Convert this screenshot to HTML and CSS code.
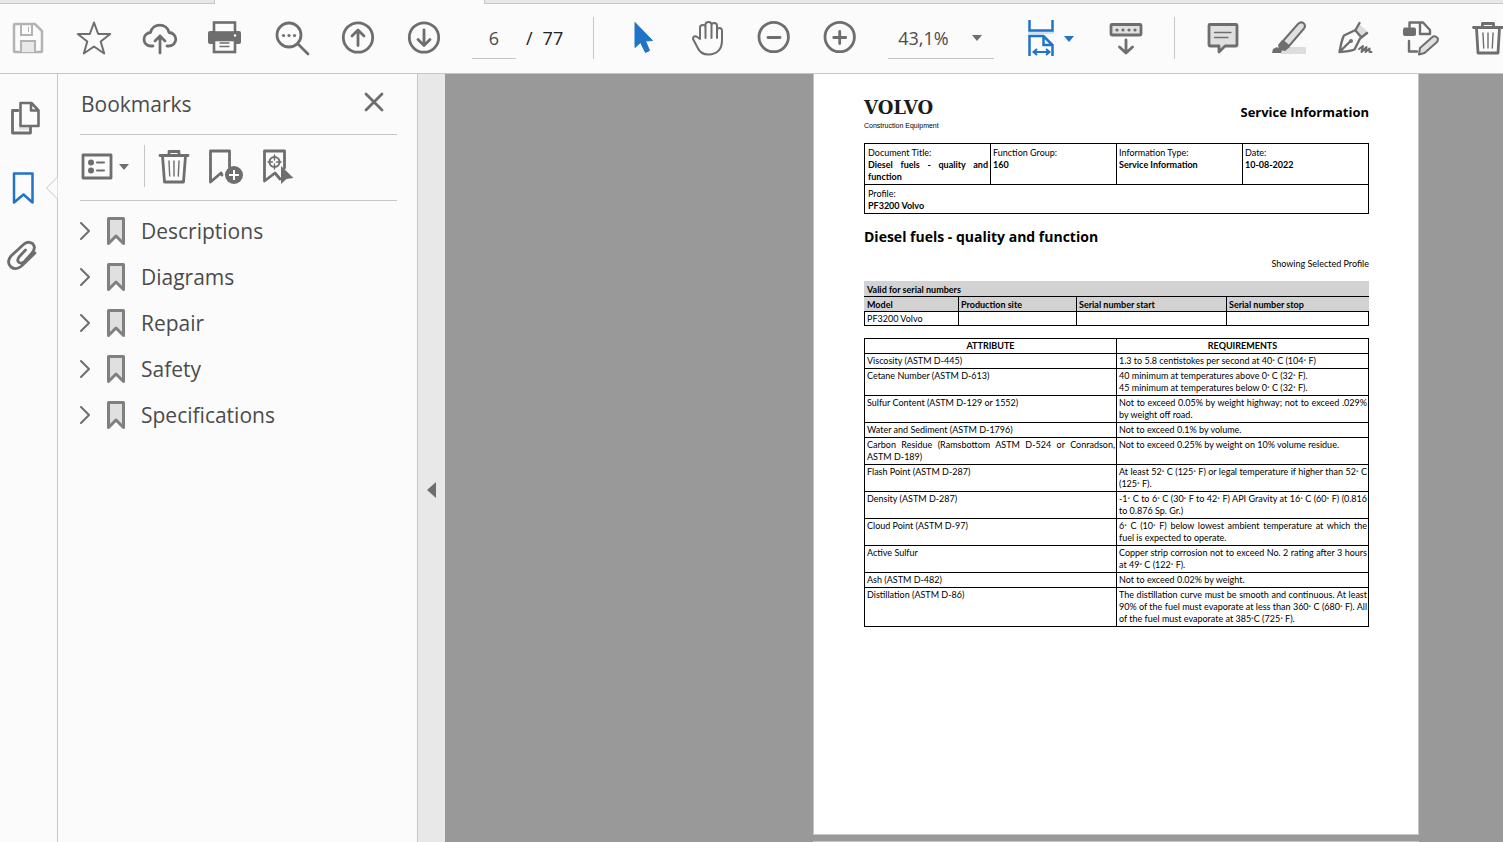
FILE: index.html
```html
<!DOCTYPE html>
<html lang="en">
<head>
<meta charset="utf-8">
<title>Service manual</title>
<link rel="stylesheet" href="styles.css">
</head>
<body>
<div class="app">
  <div class="tabs"><span class="tab-inactive tab-left"></span><span class="tab-active"></span><span class="tab-inactive tab-rest"></span></div>
  <header class="toolbar">
    <div class="group file-group">
      <button class="tool" aria-label="Save" disabled><svg viewBox="0 0 46 46"><g fill="none" stroke="#b3b3b3" stroke-width="2.500"><path d="M10 9h20l7 7v20q0 1-1 1H10q-1 0-1-1V10q0-1 1-1z"/><path stroke-width="2" d="M16 9v11h11V9"/><path stroke-width="2" fill="#e8e8e8" d="M16 37V26h14v11"/><path stroke-width="1" d="M23.500 12v5"/></g></svg></button>
      <button class="tool" aria-label="Star"><svg viewBox="0 0 46 46"><path class="line" d="M23 7.500l4.200 11.500h12l-9.500 7.500 3.500 12-10.200-7-10.200 7 3.500-12L6.800 19h12z"/></svg></button>
      <button class="tool" aria-label="Upload"><svg viewBox="0 0 46 46"><path class="line thick" d="M16 31h-2a6.500 6.500 0 0 1-.5-13.500 9.500 9.500 0 0 1 18.500 0 6.700 6.700 0 0 1 0 13.500h-2M23 38V21M18 26l5-5 5 5"/></svg></button>
      <button class="tool" aria-label="Print"><svg viewBox="0 0 46 46"><rect x="5" y="16" width="33" height="13" rx="2" class="solid"/><rect x="11" y="7.500" width="21" height="10" class="paper"/><rect x="11" y="25" width="21" height="12" class="paper"/><path class="solid" d="M10 17h23v8H10z"/><path class="line thin" d="M17 28h9M17 31.500h9"/><circle cx="32" cy="20.500" r="1.200" fill="#fff"/></svg></button>
      <button class="tool" aria-label="Find"><svg viewBox="0 0 46 46"><circle cx="20" cy="20" r="12" class="line thick"/><path class="line thick" d="M29 29l10 10"/><g class="solid"><circle cx="14.500" cy="20.500" r="1.600"/><circle cx="20" cy="20.500" r="1.600"/><circle cx="25.500" cy="20.500" r="1.600"/></g></svg></button>
      <button class="tool" aria-label="Previous page"><svg viewBox="0 0 46 46"><circle cx="23" cy="22.500" r="14.700" class="line thick"/><path class="line thick" d="M23 30.500V15.500M17 21l6-6 6 6"/></svg></button>
      <button class="tool" aria-label="Next page"><svg viewBox="0 0 46 46"><circle cx="23" cy="22.500" r="14.700" class="line thick"/><path class="line thick" d="M23 15v15M17 24.500l6 6 6-6"/></svg></button>
    </div>
    <div class="pager"><input class="page-input" aria-label="Page number" value="6"><span class="slash">/</span><span>77</span></div>
    <span class="separator"></span>
    <div class="group view-group">
      <button class="tool" aria-label="Select"><svg viewBox="0 0 46 46"><path fill="#2173c7" stroke="#2173c7" stroke-linejoin="round" d="M15 7.500v25l5.500-5 5 10 4-2-4-9.500 7-.5z"/></svg></button>
      <button class="tool" aria-label="Hand"><svg viewBox="0 0 46 46"><path class="line" d="M14 24V12.500q0-2.500 2.800-2.500t2.700 2.500V23V9.500Q19.500 7 22.500 7t3 2.500V23V10q.3-2 2.700-2 2.800 0 2.800 2.500V23v-8q.3-2 2.500-2t2.500 2.500V25q0 14-13.500 14.500-8 0-11-7L7 24q0-3.500 3.500-2.500z"/></svg></button>
      <button class="tool" aria-label="Zoom out"><svg viewBox="0 0 46 46"><circle cx="21.700" cy="22" r="14.700" class="line thick"/><path class="line thick" d="M16 22.500h12"/></svg></button>
      <button class="tool" aria-label="Zoom in"><svg viewBox="0 0 46 46"><circle cx="21.700" cy="22" r="14.700" class="line thick"/><path class="line thick" d="M15.700 22.500h12M21.700 16.500v12"/></svg></button>
    </div>
    <div class="zoom"><select class="zoom-select" aria-label="Zoom level"><option>43,1%</option></select><svg class="caret" viewBox="0 0 10 6"><path d="M0 0h10L5 6z"/></svg></div>
    <button class="tool fit" aria-label="Fit width"><svg viewBox="0 0 54 46"><path fill="#cfe0f2" d="M4 16h26v3H4z"/><g fill="none" stroke="#2173c7" stroke-width="2.500"><path d="M5.500 5v10.500h23V5M5.500 41V21h14l9 9V41M19.500 21v9h9"/><path stroke-width="2" d="M10 37h15M13 34l-3.500 3 3.500 3M22 34l3.500 3-3.500 3"/></g><path fill="#2173c7" d="M40 21h10l-5 6z"/></svg></button>
    <button class="tool read" aria-label="Scroll mode"><svg viewBox="0 0 46 46"><rect x="8" y="9.500" width="30" height="10.500" rx="1" class="line thick shade"/><g class="solid"><circle cx="14" cy="15" r="1.600"/><circle cx="20" cy="15" r="1.600"/><circle cx="26" cy="15" r="1.600"/><circle cx="32" cy="15" r="1.600"/></g><path class="line thick" d="M23 25v13M16.500 32l6.500 6 6.500-6"/></svg></button>
    <span class="separator"></span>
    <div class="group comment-group">
      <button class="tool" aria-label="Comment"><svg viewBox="0 0 46 46"><path class="line thick shade" d="M10 9.500h26q1 0 1 1V30q0 1-1 1H25l-6 6v-6h-9q-1 0-1-1V10.500q0-1 1-1z"/><path class="line thin" d="M14.500 17.500H31M14.500 22.500H28"/></svg></button>
      <button class="tool" aria-label="Highlight"><svg viewBox="0 0 46 46"><path fill="#ddd" d="M14 39l7-7h19v7z"/><path class="line shade" d="M17 26L32 9q3-3 6-.5 2 2.500 0 5L23 31z"/><path class="solid" d="M16 25l8 7-5 4-6-1-1-5zM6 38l1-4 4-2 5 4-1 2z"/></svg></button>
      <button class="tool" aria-label="Sign"><svg viewBox="0 0 46 46"><path fill="#ddd" d="M27 9l10 9-6 4-8-7z"/><path class="line pen" d="M27.500 8l-4 7-11.500 5.500q-2 3-4.500 16.500 10-.5 15-2.500l5.500-11L35 18M23.500 15.500l6 7M8 36.500L18 26.500"/><circle cx="19" cy="26" r="2" class="solid"/><path class="line" d="M27 34l4-3-1.500 6 5-5-1 5 4-3.500v3.500h2"/></svg></button>
      <button class="tool" aria-label="Edit"><svg viewBox="0 0 46 46"><rect x="5" y="12.500" width="13" height="8.500" rx="2" class="solid"/><path class="line pen" d="M11.500 12V7.500H25l7 7.500v4M22 8.500V19h9M11 26v10.500h8"/><path class="line shade" d="M21 39.500l1-6.500L35 21.500q3-1 5 2 0 2-1 3.500L26.500 38z"/></svg></button>
      <button class="tool" aria-label="Delete"><svg viewBox="0 0 46 46"><path class="line thick" d="M9.500 12.500h29M12.500 13l1.500 25h20l1.500-25M18.500 12V8.500h11V12"/><path class="line thin" d="M19 18l.7 15M24 18v15M29 18l-.7 15"/></svg></button>
    </div>
  </header>
  <div class="workspace">
    <nav class="rail">
      <button class="rail-button" aria-label="Pages"><svg viewBox="0 0 40 40"><path fill="#e3e3e3" d="M10 29h12v4H10z"/><path class="line thick" d="M9 13.500H3.500V36h18v-6"/><path class="line thick paper" d="M11.500 6h11l7 7.500V29h-18zM22 6.500v7h7.500"/></svg></button>
      <button class="rail-button" aria-label="Bookmarks"><svg viewBox="0 0 40 40"><path fill="none" stroke="#2173c7" stroke-width="2.500" stroke-linejoin="round" d="M5 6.500h18.500v29l-9-8-9.500 8z"/></svg></button>
      <button class="rail-button" aria-label="Attachments"><svg viewBox="0 0 40 40"><path class="line thick" d="M16.500 13L10 20q-2.500 3.500 0 5.500 3 1.500 5.500-1L23 16q4.500-5.500.5-9.500-5-3-9 1L2 19q-5 6 0 11 5 3.500 10-.5L26 16"/></svg></button>
      <svg class="notch" viewBox="0 0 13 24"><path fill="#fbfbfb" d="M12.500 1L1.500 12l11 11"/></svg>
    </nav>
    <aside class="panel">
      <div class="panel-head"><h2 class="panel-title">Bookmarks</h2><button class="close" aria-label="Close"><svg viewBox="0 0 20 20"><path class="line thick" d="M2 2l16 16M18 2L2 18"/></svg></button></div>
      <div class="panel-tools">
        <button class="options" aria-label="Options"><svg viewBox="0 0 50 40"><rect x="3" y="9" width="28" height="23" class="line thick"/><circle cx="11" cy="16.500" r="3" class="solid"/><circle cx="11" cy="24.500" r="3" class="solid"/><path class="line" d="M17 16.500h7M17 24.500h7"/><path class="solid" d="M39 18h10l-5 6z"/></svg></button>
        <span class="separator"></span>
        <button class="mark-tool" aria-label="Delete bookmark"><svg viewBox="0 0 40 40"><path class="line thick" d="M6 9.500h28M8.500 10l2 26h19l2-26M15 9V5.500h10V9"/><path class="line thin" d="M15 15l.7 15M20 15v15M25 15l-.7 15"/></svg></button>
        <button class="mark-tool" aria-label="New bookmark"><svg viewBox="0 0 40 40"><path class="line thick" d="M16 29l-1-2-10.500 9V5h19v16"/><circle cx="28" cy="29" r="9" class="solid"/><path stroke="#fff" stroke-width="2" d="M23 29h10M28 24v10"/></svg></button>
        <button class="mark-tool" aria-label="Find bookmark"><svg viewBox="0 0 40 40"><path class="line thick" d="M22 33l-5-6-10.500 8V5h20v17"/><circle cx="16.500" cy="16" r="5" class="line"/><path class="line thin" d="M16.500 9v5M16.500 18v5M10 16h4.500M18.500 16H23"/><path class="solid" d="M23 20l12.500 12-7 1-5.500 5z"/></svg></button>
      </div>
      <ul class="marks">
        <li><button class="mark"><svg class="chevron" viewBox="0 0 12 20"><path class="line" d="M1 2l8 8-8 8"/></svg><svg class="flag" viewBox="0 0 20 30"><path d="M2.500 2.500h15v25L10 20l-7.500 7.500z"/></svg><span>Descriptions</span></button></li>
        <li><button class="mark"><svg class="chevron" viewBox="0 0 12 20"><path class="line" d="M1 2l8 8-8 8"/></svg><svg class="flag" viewBox="0 0 20 30"><path d="M2.500 2.500h15v25L10 20l-7.500 7.500z"/></svg><span>Diagrams</span></button></li>
        <li><button class="mark"><svg class="chevron" viewBox="0 0 12 20"><path class="line" d="M1 2l8 8-8 8"/></svg><svg class="flag" viewBox="0 0 20 30"><path d="M2.500 2.500h15v25L10 20l-7.500 7.500z"/></svg><span>Repair</span></button></li>
        <li><button class="mark"><svg class="chevron" viewBox="0 0 12 20"><path class="line" d="M1 2l8 8-8 8"/></svg><svg class="flag" viewBox="0 0 20 30"><path d="M2.500 2.500h15v25L10 20l-7.500 7.500z"/></svg><span>Safety</span></button></li>
        <li><button class="mark"><svg class="chevron" viewBox="0 0 12 20"><path class="line" d="M1 2l8 8-8 8"/></svg><svg class="flag" viewBox="0 0 20 30"><path d="M2.500 2.500h15v25L10 20l-7.500 7.500z"/></svg><span>Specifications</span></button></li>
      </ul>
    </aside>
    <button class="splitter" aria-label="Collapse panel"><svg viewBox="0 0 10 16"><path class="solid" d="M9 0v16L0 8z"/></svg></button>
    <main class="viewer">
      <article class="page">
        <header class="doc-head">
          <div class="brand"><span class="logo">VOLVO</span><span class="brand-sub">Construction Equipment</span></div>
          <span class="doc-kind">Service Information</span>
        </header>
        <table class="info">
          <tr><td>Document Title:<b>Diesel fuels - quality and function</b></td><td>Function Group:<b>160</b></td><td>Information Type:<b>Service Information</b></td><td>Date:<b>10-08-2022</b></td></tr>
          <tr><td colspan="4">Profile:<b>PF3200 Volvo</b></td></tr>
        </table>
        <h1 class="doc-title">Diesel fuels - quality and function</h1>
        <p class="profile-note">Showing Selected Profile</p>
        <table class="serials">
          <colgroup><col class="c-model"><col class="c-site"><col class="c-start"><col></colgroup>
          <thead><tr><th colspan="4">Valid for serial numbers</th></tr>
          <tr><th>Model</th><th>Production site</th><th>Serial number start</th><th>Serial number stop</th></tr></thead>
          <tbody><tr><td>PF3200 Volvo</td><td></td><td></td><td></td></tr></tbody>
        </table>
        <table class="specs">
          <thead><tr><th>ATTRIBUTE</th><th>REQUIREMENTS</th></tr></thead>
          <tbody>
          <tr><td>Viscosity (ASTM D-445)</td><td>1.3 to 5.8 centistokes per second at 40<span class="deg">°</span> C (104<span class="deg">°</span> F)</td></tr>
          <tr><td>Cetane Number (ASTM D-613)</td><td>40 minimum at temperatures above 0<span class="deg">°</span> C (32<span class="deg">°</span> F).<br>45 minimum at temperatures below 0<span class="deg">°</span> C (32<span class="deg">°</span> F).</td></tr>
          <tr><td>Sulfur Content (ASTM D-129 or 1552)</td><td>Not to exceed 0.05% by weight highway; not to exceed .029% by weight off road.</td></tr>
          <tr><td>Water and Sediment (ASTM D-1796)</td><td>Not to exceed 0.1% by volume.</td></tr>
          <tr><td>Carbon Residue (Ramsbottom ASTM D-524 or Conradson, ASTM D-189)</td><td>Not to exceed 0.25% by weight on 10% volume residue.</td></tr>
          <tr><td>Flash Point (ASTM D-287)</td><td>At least 52<span class="deg">°</span> C (125<span class="deg">°</span> F) or legal temperature if higher than 52<span class="deg">°</span> C (125<span class="deg">°</span> F).</td></tr>
          <tr><td>Density (ASTM D-287)</td><td>-1<span class="deg">°</span> C to 6<span class="deg">°</span> C (30<span class="deg">°</span> F to 42<span class="deg">°</span> F) API Gravity at 16<span class="deg">°</span> C (60<span class="deg">°</span> F) (0.816 to 0.876 Sp. Gr.)</td></tr>
          <tr><td>Cloud Point (ASTM D-97)</td><td>6<span class="deg">°</span> C (10<span class="deg">°</span> F) below lowest ambient temperature at which the fuel is expected to operate.</td></tr>
          <tr><td>Active Sulfur</td><td>Copper strip corrosion not to exceed No. 2 rating after 3 hours at 49<span class="deg">°</span> C (122<span class="deg">°</span> F).</td></tr>
          <tr><td>Ash (ASTM D-482)</td><td>Not to exceed 0.02% by weight.</td></tr>
          <tr><td>Distillation (ASTM D-86)</td><td>The distillation curve must be smooth and continuous. At least 90% of the fuel must evaporate at less than 360<span class="deg">°</span> C (680<span class="deg">°</span> F). All of the fuel must evaporate at 385<span class="deg">°</span>C (725<span class="deg">°</span> F).</td></tr>
          </tbody>
        </table>
      </article>
      <div class="next-page"></div>
    </main>
  </div>
</div>
</body>
</html>
```
FILE: styles.css
```css
* { box-sizing: border-box; }
body { margin: 0; font-family: "Open Sans", "Noto Sans", sans-serif; color: #4b4b4b; background: #fbfbfb; }
button { border: 0; padding: 0; background: none; font: inherit; color: inherit; }
svg { display: block; }
.app { display: flex; flex-direction: column; height: 100vh; overflow: hidden; }

.line { fill: none; stroke: #6e6e6e; stroke-width: 2; stroke-linecap: round; stroke-linejoin: round; }
.thick { stroke-width: 2.8; }
.pen { stroke-width: 2.4; }
.thin { stroke-width: 1.4; }
.solid { fill: #6e6e6e; }
.shade { fill: #e0e0e0; }
.paper { fill: #fbfbfb; stroke: #6e6e6e; stroke-width: 2.6; }

.tabs { display: flex; height: 4px; flex: none; }
.tab-inactive { background: #e8e8e8; border-bottom: 1px solid #c6c6c6; }
.tab-left { width: 215px; border-right: 1px solid #c6c6c6; }
.tab-active { width: 269px; }
.tab-rest { flex: 1; border-left: 1px solid #c6c6c6; }

.toolbar { display: flex; align-items: center; flex: none; height: 70px; padding: 0 0 1px 5px; border-bottom: 1px solid #c6c6c6; overflow: hidden; }
.toolbar > * { flex: none; }
.group { display: flex; gap: 20px; }
.tool { width: 46px; height: 46px; flex: none; }
.separator { width: 1px; height: 42px; background: #c6c6c6; }
.pager { display: flex; align-items: center; margin: 0 30px 0 25px; font-size: 18px; color: #222; }
.page-input { width: 44px; height: 42px; border: 0; border-bottom: 1px solid #c6c6c6; padding: 0; background: none; font: inherit; color: #4b4b4b; text-align: center; }
.slash { margin: 0 10px; }
.view-group { margin-left: 26px; }
.zoom { position: relative; margin-left: 24px; }
.zoom-select { display: block; width: 106px; height: 42px; border: 0; border-bottom: 1px solid #c6c6c6; border-radius: 0; padding: 0 10px; background: none; appearance: none; font: inherit; font-size: 18px; color: #4b4b4b; }
.caret { position: absolute; right: 12px; top: 18px; width: 10px; height: 6px; fill: #6e6e6e; pointer-events: none; }
.fit { width: 54px; margin-left: 30px; }
.read { margin: 0 25px; }
.comment-group { margin-left: 25px; }

.workspace { display: flex; flex: 1; min-height: 0; }
.rail { position: relative; display: flex; flex-direction: column; gap: 30px; width: 58px; padding: 23px 0 0 9px; border-right: 1px solid #c6c6c6; flex: none; }
.rail-button { width: 40px; height: 40px; }
.rail-button svg { overflow: visible; }
.notch { position: absolute; right: -1px; top: 102px; width: 13px; height: 24px; stroke: #c6c6c6; }
.panel { width: 360px; flex: none; padding: 0 20px 0 22px; border-right: 1px solid #c6c6c6; }
.panel-head { display: flex; align-items: center; justify-content: space-between; height: 61px; padding-right: 13px; border-bottom: 1px solid #c6c6c6; }
.panel-title { margin: 0; padding-left: 1px; font-size: 21px; font-weight: 400; }
.close { width: 20px; height: 20px; margin-bottom: 4px; }
.panel-tools { display: flex; align-items: center; height: 66px; padding-bottom: 4px; border-bottom: 1px solid #c6c6c6; }
.options { width: 50px; margin-right: 14px; }
.mark-tool { width: 40px; margin-right: 12px; }
.panel-tools .separator + .mark-tool { margin-left: 9px; }
.marks { list-style: none; margin: 0; padding: 7px 0 0; }
.mark { display: flex; align-items: center; width: 100%; height: 46px; font-size: 21px; text-align: left; }
.chevron { width: 12px; height: 20px; margin-right: 14px; }
.flag { width: 20px; height: 30px; margin-right: 15px; fill: #e0e0e0; stroke: #808080; stroke-width: 3; stroke-linejoin: round; }
.splitter { display: flex; align-items: center; justify-content: center; width: 27px; flex: none; background: #e8e8e8; }
.splitter svg { width: 10px; height: 16px; margin-top: 63px; }

.viewer { display: flex; flex-direction: column; flex: 1; min-width: 0; padding: 0 84px 0 368px; background: #999; }
.page { flex: 1; min-height: 0; padding: 26px 49px 0 50px; border: 1px solid #c6c6c6; border-top: 0; background: #fff; color: #000; font: 9px/12px Lato, "Open Sans", sans-serif; }
.next-page { height: 1px; margin-top: 6px; background: #c6c6c6; }
.doc-head { display: flex; justify-content: space-between; height: 43px; }
.brand { display: flex; flex-direction: column; }
.logo { font: 700 18px/16px "DejaVu Serif", serif; color: #1b1b1b; }
.brand-sub { padding-top: 5px; font: 7px/10px "Liberation Sans", sans-serif; }
.doc-kind { font: 700 13px/24px "Open Sans", sans-serif; }
table { width: 100%; border-collapse: collapse; table-layout: fixed; }
td, th { border: 1px solid #000; padding: 1px 2px; text-align: justify; vertical-align: top; }
.info td { padding: 3px 2px 1px; }
.info td:first-child { padding-left: 3px; }
.info td b { display: block; }
.info tr:first-child td { height: 41px; }
.doc-title { margin: 11px 0 7px; font: 700 14px/24px "Open Sans", sans-serif; }
.profile-note { margin: 0 0 10px; padding-top: 1px; text-align: right; line-height: 14px; }
.serials { margin-bottom: 12px; }
.c-model { width: 94px; }
.c-site { width: 118px; }
.c-start { width: 150px; }
.serials th { padding: 2px 2px 0; background: #d2d2d2; text-align: left; }
.serials th:first-child { border-left-color: #d2d2d2; }
.serials th:last-child { border-right-color: #d2d2d2; }
.serials tr:first-child th { border-top-color: #d2d2d2; }
.serials tbody td { padding: 1px 2px 0; border-top-color: #000; }
.specs th { text-align: center; }
.specs td { padding-right: 1px; }
.deg { font-family: Roboto, sans-serif; font-size: 7px; line-height: 1; }
```
